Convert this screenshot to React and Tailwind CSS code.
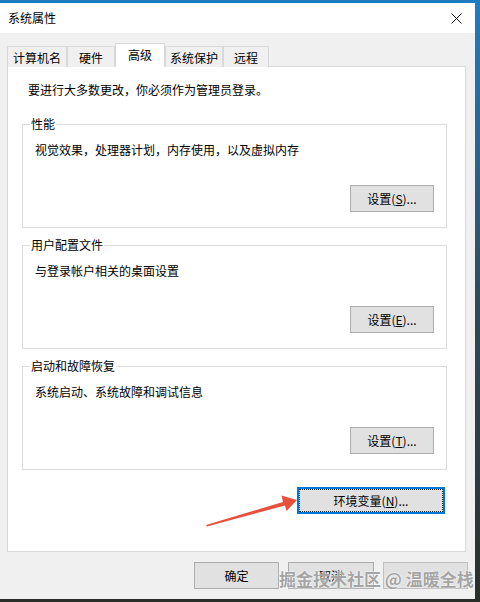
import React from "react";

const TABS = [
  { label: "计算机名", w: "w-[60px]" },
  { label: "硬件", w: "w-[48px]" },
  { label: "高级", w: "w-[50px]", active: true },
  { label: "系统保护", w: "w-[58px]" },
  { label: "远程", w: "w-[46px]" },
];

const GROUPS = [
  { title: "性能", desc: "视觉效果，处理器计划，内存使用，以及虚拟内存", key: "S" },
  { title: "用户配置文件", desc: "与登录帐户相关的桌面设置", key: "E" },
  { title: "启动和故障恢复", desc: "系统启动、系统故障和调试信息", key: "T" },
];

const WinButton = ({ children, className = "" }) => (
  <button
    className={`h-[27px] bg-[#e1e1e1] border border-[#adadad] text-[12px] leading-[16px] text-black ${className}`}
  >
    {children}
  </button>
);

export default function App() {
  return (
    <div className="w-[480px] h-[602px] overflow-hidden pt-[3px] bg-gradient-to-b from-[#1f7cc2] via-[#2f4a5a] to-[#2b2f2a] font-['Noto_Sans_CJK_SC','Liberation_Sans',sans-serif] text-[12px] text-black">
      <div className="relative w-[475px] h-[596px] flex flex-col bg-[#f0f0f0]">
        {/* title bar */}
        <div className="h-[30px] bg-white flex items-center justify-between pl-[8px] pr-[13px]">
          <span className="leading-[16px]">系统属性</span>
          <svg width="11" height="11" viewBox="0 0 11 11">
            <path d="M0.5 0.5L10.5 10.5M10.5 0.5L0.5 10.5" stroke="#111" strokeWidth="1" />
          </svg>
        </div>

        <div className="flex-1 flex flex-col pt-[10px]">
          {/* tabs */}
          <div className="relative z-10 flex items-end ml-[7px] -mb-px h-[24px]">
            {TABS.map((t) =>
              t.active ? (
                <div
                  key={t.label}
                  className={`${t.w} h-[24px] bg-white border border-b-0 border-[#d9d9d9] flex justify-center pt-[3px] leading-[16px]`}
                >
                  {t.label}
                </div>
              ) : (
                <div
                  key={t.label}
                  className={`${t.w} h-[21px] bg-[#f0f0f0] border border-b-0 border-[#d9d9d9] flex justify-center pt-[3px] leading-[16px]`}
                >
                  {t.label}
                </div>
              )
            )}
          </div>

          {/* panel */}
          <div className="ml-[7px] w-[459px] h-[486px] bg-white border border-[#d9d9d9] pt-[15px] pl-[14px] pr-[18px] flex flex-col">
            <p className="pl-[6px] leading-[16px]">要进行大多数更改，你必须作为管理员登录。</p>

            {GROUPS.map((g, i) => (
              <fieldset
                key={g.title}
                className={`${i === 0 ? "mt-[18px]" : "mt-[9px]"} border border-[#dcdcdc] px-[12px] pb-[15px]`}
              >
                <legend className="ml-[-5px] px-[1px] leading-[16px]">{g.title}</legend>
                <p className="mt-[10px] leading-[16px]">{g.desc}</p>
                <div className="mt-[27px] flex justify-end">
                  <WinButton className="w-[84px]">
                    设置(<u>{g.key}</u>)...
                  </WinButton>
                </div>
              </fieldset>
            ))}

            <button className="self-end mr-[2px] mt-[17px] w-[148px] h-[27px] bg-[#e1e1e1] border-2 border-[#0078d7] outline-1 outline-dotted outline-[#222] -outline-offset-3 leading-[16px]">
              环境变量(<u>N</u>)...
            </button>
          </div>

          {/* dialog buttons */}
          <div className="mt-[10px] flex justify-end gap-[9px] pr-[7px]">
            <WinButton className="w-[85px]">确定</WinButton>
            <WinButton className="w-[86px]">取消</WinButton>
            <WinButton className="w-[85px] bg-[#cccccc] border-[#bfbfbf]" />
          </div>
        </div>

        {/* red arrow annotation */}
        <svg
          className="absolute left-[200px] top-[485px]"
          width="100"
          height="42"
          viewBox="0 0 100 42"
        >
          <polygon
            points="6,37 83,14 81.5,7.5 97,12 86.5,23 85,17.5 7,38.5"
            fill="#e9503c"
          />
        </svg>

        {/* watermark */}
        <div className="absolute left-[279px] top-[565px] text-[17px] leading-[22px] font-bold text-[#8c8c8c]/80 [text-shadow:0_0_2px_#fff,0_0_1px_#fff] whitespace-nowrap">
          掘金技术社区 @ 温暖全栈
        </div>
      </div>
    </div>
  );
}
